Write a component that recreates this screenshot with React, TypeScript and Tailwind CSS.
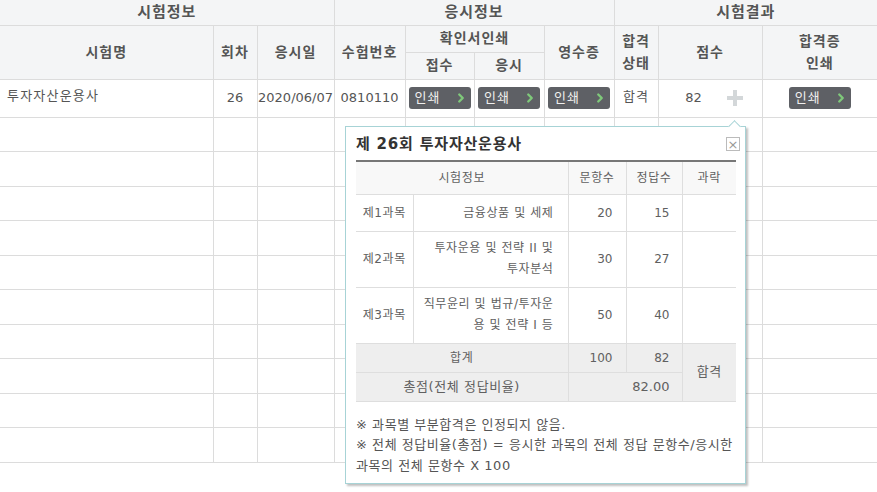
import { ChevronRight } from 'lucide-react';

const font = "font-['DejaVu_Sans','Noto_Sans_CJK_KR',sans-serif]";

function PrintButton() {
  return (
    <span className="inline-flex items-center justify-between w-[62px] h-[22px] rounded-[3px] bg-[#5e6065] pl-[6px] pr-[3px] text-[13px] tracking-[1px] text-[#f0f0f0]">
      인쇄
      <ChevronRight size={14} strokeWidth={4} className="text-[#7fc97a]" />
    </span>
  );
}

function PlusIcon() {
  return (
    <svg width="16" height="16" viewBox="0 0 16 16">
      <rect x="6" y="0" width="4" height="16" fill="#d3d7d9" />
      <rect x="0" y="6" width="16" height="4" fill="#d3d7d9" />
    </svg>
  );
}

const th = 'border border-[#dcdcdc] bg-[#f4f5f6] text-[#555] font-bold text-center tracking-[1px]';
const td = 'border border-[#dcdcdc] text-[#555] text-[13px] text-center';

function ScorePopup() {
  const cell = 'border border-[#dedede] text-[12px] text-[#606060]';
  const ko = 'tracking-[0.6px]';
  return (
    <div className="absolute left-[345px] top-[126px] w-[401px] h-[358px] bg-white border border-[#a7d3d6] shadow-[2px_2px_2px_rgba(0,0,0,0.25)] px-[10px]">
      {/* pointer */}
      <div className="absolute -top-[5px] right-[6px] w-[9px] h-[9px] rotate-45 bg-white border-l border-t border-[#a7d3d6]" />
      <div className="flex items-center justify-between h-[33px] pt-[1px]">
        <h3 className="text-[15px] font-bold text-[#333] tracking-[0.8px]">제 26회 투자자산운용사</h3>
        <span className="flex items-center justify-center w-[14px] h-[14px] border border-[#bbb] text-[#999] text-[13px] leading-none mr-[-5px]">
          ×
        </span>
      </div>
      <table className="w-[380px] table-fixed border-collapse border-t-[2px] border-t-[#777]">
        <colgroup>
          <col className="w-[57px]" />
          <col className="w-[155px]" />
          <col className="w-[58px]" />
          <col className="w-[56px]" />
          <col className="w-[54px]" />
        </colgroup>
        <tbody>
          <tr className="h-[33px] bg-[#f8f8f8]">
            <td colSpan={2} className={`${cell} ${ko} text-center border-l-0`}>시험정보</td>
            <td className={`${cell} ${ko} text-center`}>문항수</td>
            <td className={`${cell} ${ko} text-center`}>정답수</td>
            <td className={`${cell} ${ko} text-center border-r-0`}>과락</td>
          </tr>
          <tr className="h-[37px]">
            <td className={`${cell} ${ko} text-center border-l-0`}>제1과목</td>
            <td className={`${cell} ${ko} text-right pr-[14px]`}>금융상품 및 세제</td>
            <td className={`${cell} text-right pr-[13px]`}>20</td>
            <td className={`${cell} text-right pr-[12px]`}>15</td>
            <td className={`${cell} border-r-0`} />
          </tr>
          <tr className="h-[56px]">
            <td className={`${cell} ${ko} text-center border-l-0`}>제2과목</td>
            <td className={`${cell} ${ko} text-right pr-[14px] leading-[21px] whitespace-nowrap`}>
              투자운용 및 전략 II 및<br />투자분석
            </td>
            <td className={`${cell} text-right pr-[13px]`}>30</td>
            <td className={`${cell} text-right pr-[12px]`}>27</td>
            <td className={`${cell} border-r-0`} />
          </tr>
          <tr className="h-[56px]">
            <td className={`${cell} ${ko} text-center border-l-0`}>제3과목</td>
            <td className={`${cell} ${ko} text-right pr-[14px] leading-[21px] whitespace-nowrap`}>
              직무윤리 및 법규/투자운<br />용 및 전략 I 등
            </td>
            <td className={`${cell} text-right pr-[13px]`}>50</td>
            <td className={`${cell} text-right pr-[12px]`}>40</td>
            <td className={`${cell} border-r-0`} />
          </tr>
          <tr className="h-[29px] bg-[#eeeeee]">
            <td colSpan={2} className={`${cell} ${ko} text-center border-l-0`}>합계</td>
            <td className={`${cell} text-right pr-[13px]`}>100</td>
            <td className={`${cell} text-right pr-[12px]`}>82</td>
            <td rowSpan={2} className={`${cell} ${ko} text-center text-[13px] border-r-0`}>합격</td>
          </tr>
          <tr className="h-[29px] bg-[#eeeeee]">
            <td colSpan={2} className={`${cell} ${ko} text-center text-[13px] border-l-0`}>총점(전체 정답비율)</td>
            <td colSpan={2} className={`${cell} text-right pr-[12px] text-[13px]`}>82.00</td>
          </tr>
        </tbody>
      </table>
      <div className="mt-[13px] text-[13px] leading-[20.5px] text-[#555] whitespace-nowrap tracking-[0.55px]">
        <p>※ 과목별 부분합격은 인정되지 않음.</p>
        <p>
          ※ 전체 정답비율(총점) = 응시한 과목의 전체 정답 문항수/응시한
          <br />
          과목의 전체 문항수 X 100
        </p>
      </div>
    </div>
  );
}

export default function App() {
  const emptyRows = Array.from({ length: 10 });
  return (
    <div className={`relative w-[877px] h-[492px] bg-white overflow-hidden ${font}`}>
      <table className="w-[877px] table-fixed border-collapse">
        <colgroup>
          <col className="w-[213px]" />
          <col className="w-[44px]" />
          <col className="w-[77px]" />
          <col className="w-[71px]" />
          <col className="w-[69px]" />
          <col className="w-[70px]" />
          <col className="w-[70px]" />
          <col className="w-[44px]" />
          <col className="w-[104px]" />
          <col className="w-[115px]" />
        </colgroup>
        <thead>
          <tr className="h-[25px] text-[15px]">
            <th colSpan={3} className={`${th} border-l-0 border-t-0`}>시험정보</th>
            <th colSpan={4} className={`${th} border-t-0`}>응시정보</th>
            <th colSpan={3} className={`${th} border-r-0 border-t-0`}>시험결과</th>
          </tr>
          <tr className="h-[27px] text-[14px]">
            <th rowSpan={2} className={`${th} border-l-0`}>시험명</th>
            <th rowSpan={2} className={th}>회차</th>
            <th rowSpan={2} className={th}>응시일</th>
            <th rowSpan={2} className={th}>수험번호</th>
            <th colSpan={2} className={th}>확인서인쇄</th>
            <th rowSpan={2} className={th}>영수증</th>
            <th rowSpan={2} className={`${th} leading-[22px]`}>합격<br />상태</th>
            <th rowSpan={2} className={th}>점수</th>
            <th rowSpan={2} className={`${th} border-r-0 leading-[22px]`}>합격증<br />인쇄</th>
          </tr>
          <tr className="h-[27px] text-[14px]">
            <th className={th}>접수</th>
            <th className={th}>응시</th>
          </tr>
        </thead>
        <tbody>
          <tr className="h-[38px]">
            <td className={`${td} text-left pl-[7px] pb-[4px] border-l-0 tracking-[1.2px]`}>투자자산운용사</td>
            <td className={td}>26</td>
            <td className={td}>2020/06/07</td>
            <td className={td}>0810110</td>
            <td className={td}><PrintButton /></td>
            <td className={td}><PrintButton /></td>
            <td className={td}><PrintButton /></td>
            <td className={`${td} pb-[3px] tracking-[1px]`}>합격</td>
            <td className={td}>
              <div className="flex items-center justify-center gap-[25px] pl-[8px]">
                <span>82</span>
                <PlusIcon />
              </div>
            </td>
            <td className={`${td} border-r-0`}><PrintButton /></td>
          </tr>
          {emptyRows.map((_, i) => (
            <tr key={i} className="h-[34.5px]">
              {Array.from({ length: 10 }).map((__, j) => (
                <td
                  key={j}
                  className={`border border-[#dcdcdc] ${j === 0 ? 'border-l-0' : ''} ${j === 9 ? 'border-r-0' : ''}`}
                />
              ))}
            </tr>
          ))}
        </tbody>
      </table>
      <ScorePopup />
    </div>
  );
}
